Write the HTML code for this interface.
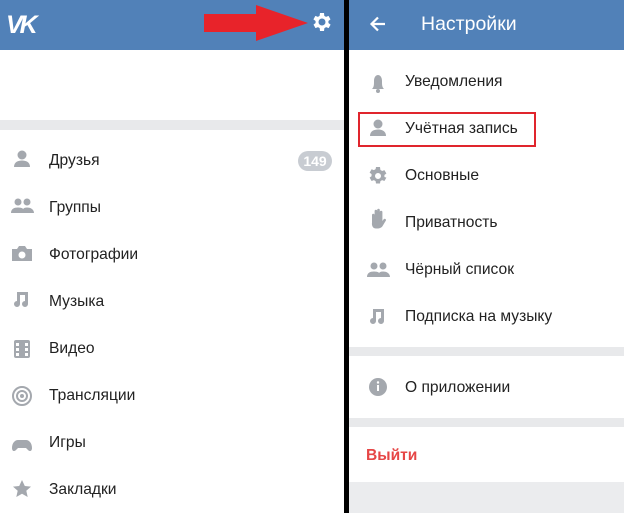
<!DOCTYPE html>
<html><head><meta charset="utf-8"><style>
*{margin:0;padding:0;box-sizing:border-box}
body{width:624px;height:513px;overflow:hidden;position:relative;background:#fff;font-family:"Liberation Sans","Noto Sans CJK SC",sans-serif;color:#222}
.a{position:absolute}
.t{position:absolute;font-size:15.6px;line-height:18px;transform:translateY(-9px)}
</style></head><body>
<div class="a" style="left:0;top:0;width:345px;height:50px;background:#5181b8"></div>
<div class="a" style="left:0;top:120px;width:345px;height:10px;background:#e8e9eb"></div>
<div class="a" style="left:6px;top:11px;color:#fff;font-weight:bold;font-size:25px;letter-spacing:-3px;font-style:italic">VK</div>
<svg class="a" style="left:204px;top:5px" width="104" height="36"><polygon points="0,9 52,9 52,0 104,18 52,36 52,27 0,27" fill="#e8232a"/></svg>
<svg class="a" style="left:310px;top:10px" width="24" height="24" viewBox="0 0 24 24"><path fill="#fff" d="M19.4 13a7.5 7.5 0 0 0 0-2l2.1-1.6-2-3.5-2.5 1a7 7 0 0 0-1.7-1L15 3h-4l-.4 2.9a7 7 0 0 0-1.7 1l-2.5-1-2 3.5L6.6 11a7.5 7.5 0 0 0 0 2l-2.1 1.6 2 3.5 2.5-1a7 7 0 0 0 1.7 1L11 21h4l.4-2.9a7 7 0 0 0 1.7-1l2.5 1 2-3.5zM13 15.5a3.5 3.5 0 1 1 0-7 3.5 3.5 0 0 1 0 7z" transform="translate(-1 0)"/></svg>

<div class="t" style="left:49px;top:161px">Друзья</div>
<div class="a" style="left:298px;top:151px;width:34px;height:20px;border-radius:10px;background:#c8ccd2;color:#fff;font-size:14px;font-weight:bold;text-align:center;line-height:20px">149</div>
<div class="t" style="left:49px;top:208px">Группы</div>
<div class="t" style="left:49px;top:255px">Фотографии</div>
<div class="t" style="left:49px;top:302px">Музыка</div>
<div class="t" style="left:49px;top:349px">Видео</div>
<div class="t" style="left:49px;top:396px">Трансляции</div>
<div class="t" style="left:49px;top:443px">Игры</div>
<div class="t" style="left:49px;top:490px">Закладки</div>

<svg class="a" style="left:0;top:140px" width="45" height="373" fill="#a4a8ae">
<circle cx="22" cy="15" r="4.5"/><path d="M14 27c0-5 4-6.5 8-6.5s8 1.5 8 6.5z"/>
<circle cx="18" cy="62" r="3.5"/><circle cx="27" cy="62" r="3.5"/><path d="M11 73c0-4 3-5.5 7-5.5s7 1.5 7 5.5zM22 73c0-4 2-5.5 5-5.5s7 1.5 7 5.5z"/>
<path d="M12 109h5l2-3h6l2 3h5v12H12z"/><circle cx="22" cy="115" r="3.5" fill="#fff"/>
<path d="M17 152h3v12a3 3 0 1 1-3-3zM20 152h8v3h-8z"/><path d="M25 155h3v9a3 3 0 1 1-3-3z"/>
<rect x="14" y="200" width="16" height="18" rx="2"/><g fill="#fff"><rect x="16" y="203" width="3" height="3"/><rect x="16" y="208" width="3" height="3"/><rect x="16" y="213" width="3" height="3"/><rect x="25" y="203" width="3" height="3"/><rect x="25" y="208" width="3" height="3"/><rect x="25" y="213" width="3" height="3"/></g>
<circle cx="22" cy="256" r="9" fill="none" stroke="#a4a8ae" stroke-width="2"/><circle cx="22" cy="256" r="5" fill="none" stroke="#a4a8ae" stroke-width="2"/><circle cx="22" cy="256" r="2"/>
<path d="M12 308c0-5 3-8 6-8h8c3 0 6 3 6 8 0 3-2 4-4 2l-2-2h-8l-2 2c-2 2-4 1-4-2z"/>
<path d="M22 340l2.8 6 6.2.6-4.7 4.2 1.4 6.2L22 353.8 16.3 357l1.4-6.2L13 346.6l6.2-.6z"/>
</svg>

<div class="a" style="left:344px;top:0;width:5px;height:513px;background:#000"></div>

<div class="a" style="left:349px;top:0;width:275px;height:50px;background:#5181b8"></div>
<svg class="a" style="left:369px;top:15px" width="18" height="18"><path d="M16 9H3M9 2.5L2.5 9 9 15.5" stroke="#fff" stroke-width="2.2" fill="none"/></svg>
<div class="a" style="left:421px;top:13px;color:#fff;font-size:19.5px">Настройки</div>

<div class="t" style="left:405px;top:82px">Уведомления</div>
<div class="t" style="left:405px;top:129px">Учётная запись</div>
<div class="a" style="left:358px;top:112px;width:178px;height:35px;border:2px solid #e0252d"></div>
<div class="t" style="left:405px;top:176px">Основные</div>
<div class="t" style="left:405px;top:223px">Приватность</div>
<div class="t" style="left:405px;top:270px">Чёрный список</div>
<div class="t" style="left:405px;top:317px">Подписка на музыку</div>
<div class="a" style="left:349px;top:347px;width:275px;height:9px;background:#e8e9eb"></div>
<div class="t" style="left:405px;top:388px">О приложении</div>
<div class="a" style="left:349px;top:418px;width:275px;height:9px;background:#e8e9eb"></div>
<div class="t" style="left:366px;top:456px;color:#e64646;font-weight:bold">Выйти</div>
<div class="a" style="left:349px;top:482px;width:275px;height:31px;background:#ebecee"></div>

<svg class="a" style="left:356px;top:60px" width="45" height="345" fill="#a4a8ae">
<path d="M16 29c2-2 2-4 2-8 0-4 2-6 4-6s4 2 4 6c0 4 0 6 2 8z"/><circle cx="22" cy="31" r="2"/>
<circle cx="22" cy="64" r="4.5"/><path d="M14 76c0-5 4-6.5 8-6.5s8 1.5 8 6.5z"/>
<path d="M31 117a7 7 0 0 0 0-2l2-1.5-2-3.4-2.3.9a7 7 0 0 0-1.7-1L26.6 107h-4l-.4 2.1a7 7 0 0 0-1.7 1l-2.3-.9-2 3.4 2 1.5a7 7 0 0 0 0 2l-2 1.5 2 3.4 2.3-.9a7 7 0 0 0 1.7 1l.4 2.4h4l.4-2.4a7 7 0 0 0 1.7-1l2.3.9 2-3.4zM24.6 119a3 3 0 1 1 0-6 3 3 0 0 1 0 6z" transform="translate(-2.6 0)"/>
<path d="M16 163v-8a1.3 1.3 0 0 1 2.6 0v-4a1.3 1.3 0 0 1 2.6 0v-1a1.3 1.3 0 0 1 2.6 0v2a1.3 1.3 0 0 1 2.6 0v9l1.5-2a1.3 1.3 0 0 1 2 1.5l-3 5c-1 2-3 3-5 3h-2c-2.5 0-4-2-4-5z"/>
<circle cx="18" cy="206" r="3.5"/><circle cx="27" cy="206" r="3.5"/><path d="M11 217c0-4 3-5.5 7-5.5s7 1.5 7 5.5zM22 217c0-4 2-5.5 5-5.5s7 1.5 7 5.5z"/>
<path d="M17 249h3v12a3 3 0 1 1-3-3zM20 249h8v3h-8z"/><path d="M25 252h3v9a3 3 0 1 1-3-3z"/>
<circle cx="22" cy="327" r="9"/><rect x="21" y="325" width="2" height="6" fill="#fff"/><circle cx="22" cy="322.5" r="1.2" fill="#fff"/>
</svg>
</body></html>
